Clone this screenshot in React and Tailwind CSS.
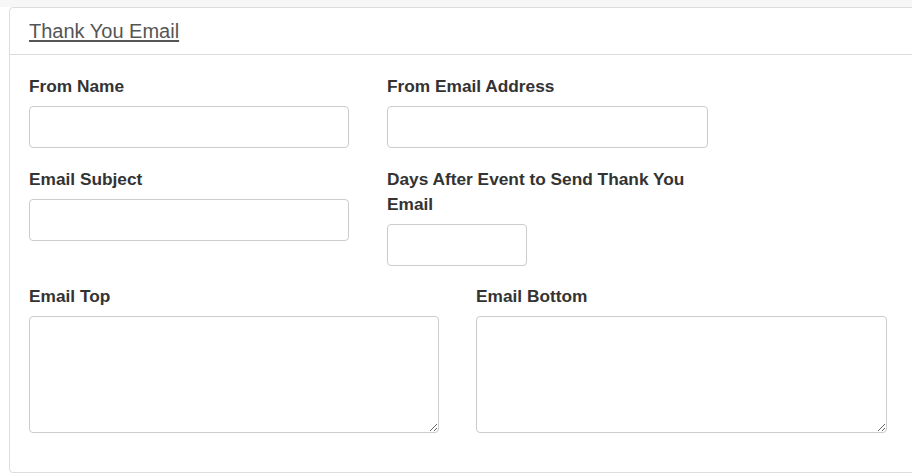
import React from 'react';

const labelCls = 'block text-[17.3px] font-bold leading-[25px] text-[#333] mb-[7px]';

const Field = ({ label, width, inputWidth }) => (
  <div className={width}>
    <label className={labelCls}>{label}</label>
    <input
      type="text"
      className={`${inputWidth} h-[42px] block rounded-[4px] border border-[#ccc] bg-white px-3 outline-none`}
    />
  </div>
);

const App = () => {
  return (
    <div className="w-[912px] h-[476px] overflow-hidden bg-white font-['Liberation_Sans',Arial,sans-serif]">
      <div className="h-[7px] bg-[#f7f7f7]" />
      <div className="ml-[9px] w-[960px] border border-[#ddd] rounded-[4px] bg-white">
        {/* header */}
        <div className="h-[47px] px-[19px] flex items-center border-b border-[#ddd]">
          <a href="#" className="text-[20px] text-[#555] underline underline-offset-[2px]">
            Thank You Email
          </a>
        </div>

        {/* body */}
        <div className="pt-[19px] px-[19px] pb-[39px]">
          <div className="flex gap-[38px]">
            <Field label="From Name" width="w-[320px]" inputWidth="w-[320px]" />
            <Field label="From Email Address" width="w-[321px]" inputWidth="w-[321px]" />
          </div>

          <div className="flex gap-[38px] mt-[19px]">
            <Field label="Email Subject" width="w-[320px]" inputWidth="w-[320px]" />
            <Field label="Days After Event to Send Thank You Email" width="w-[321px]" inputWidth="w-[140px]" />
          </div>

          <div className="flex gap-[37px] mt-[18px]">
            <div className="w-[410px]">
              <label className={labelCls}>Email Top</label>
              <textarea className="block w-[410px] h-[117px] rounded-[4px] border border-[#ccc] bg-white outline-none" />
            </div>
            <div className="w-[411px]">
              <label className={labelCls}>Email Bottom</label>
              <textarea className="block w-[411px] h-[117px] rounded-[4px] border border-[#ccc] bg-white outline-none" />
            </div>
          </div>
        </div>
      </div>
    </div>
  );
};

export default App;
